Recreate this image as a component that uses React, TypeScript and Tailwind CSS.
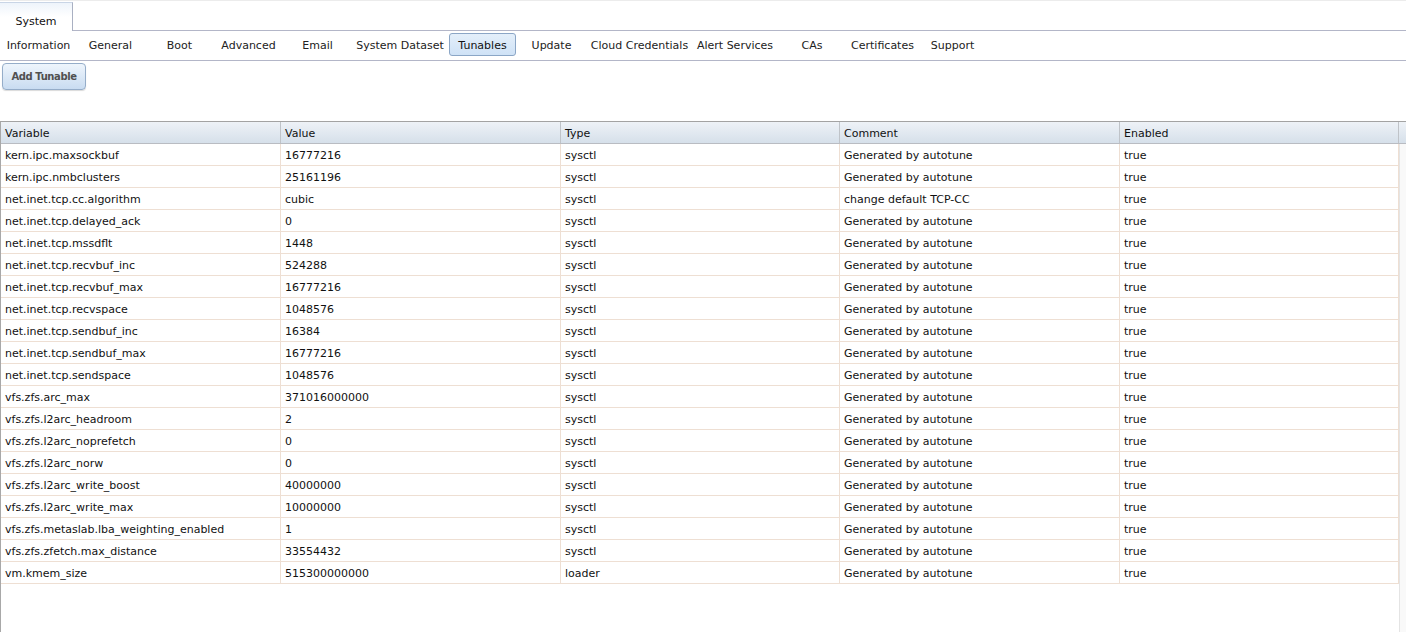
import React from "react";

const tabs: { label: string; w: string; active?: boolean }[] = [
  { label: "Information", w: "w-[73px]" },
  { label: "General", w: "w-[67px]" },
  { label: "Boot", w: "w-[67px]" },
  { label: "Advanced", w: "w-[67px]" },
  { label: "Email", w: "w-[67px]" },
  { label: "System Dataset", w: "w-[94px]" },
  { label: "Tunables", w: "w-[67px]", active: true },
  { label: "Update", w: "w-[67px]" },
  { label: "Cloud Credentials", w: "w-[105px]" },
  { label: "Alert Services", w: "w-[82px]" },
  { label: "CAs", w: "w-[68px]" },
  { label: "Certificates", w: "w-[69px]" },
  { label: "Support", w: "w-[67px]" },
];

const rows: [string, string, string, string, string][] = [
  ["kern.ipc.maxsockbuf", "16777216", "sysctl", "Generated by autotune", "true"],
  ["kern.ipc.nmbclusters", "25161196", "sysctl", "Generated by autotune", "true"],
  ["net.inet.tcp.cc.algorithm", "cubic", "sysctl", "change default TCP-CC", "true"],
  ["net.inet.tcp.delayed_ack", "0", "sysctl", "Generated by autotune", "true"],
  ["net.inet.tcp.mssdflt", "1448", "sysctl", "Generated by autotune", "true"],
  ["net.inet.tcp.recvbuf_inc", "524288", "sysctl", "Generated by autotune", "true"],
  ["net.inet.tcp.recvbuf_max", "16777216", "sysctl", "Generated by autotune", "true"],
  ["net.inet.tcp.recvspace", "1048576", "sysctl", "Generated by autotune", "true"],
  ["net.inet.tcp.sendbuf_inc", "16384", "sysctl", "Generated by autotune", "true"],
  ["net.inet.tcp.sendbuf_max", "16777216", "sysctl", "Generated by autotune", "true"],
  ["net.inet.tcp.sendspace", "1048576", "sysctl", "Generated by autotune", "true"],
  ["vfs.zfs.arc_max", "371016000000", "sysctl", "Generated by autotune", "true"],
  ["vfs.zfs.l2arc_headroom", "2", "sysctl", "Generated by autotune", "true"],
  ["vfs.zfs.l2arc_noprefetch", "0", "sysctl", "Generated by autotune", "true"],
  ["vfs.zfs.l2arc_norw", "0", "sysctl", "Generated by autotune", "true"],
  ["vfs.zfs.l2arc_write_boost", "40000000", "sysctl", "Generated by autotune", "true"],
  ["vfs.zfs.l2arc_write_max", "10000000", "sysctl", "Generated by autotune", "true"],
  ["vfs.zfs.metaslab.lba_weighting_enabled", "1", "sysctl", "Generated by autotune", "true"],
  ["vfs.zfs.zfetch.max_distance", "33554432", "sysctl", "Generated by autotune", "true"],
  ["vm.kmem_size", "515300000000", "loader", "Generated by autotune", "true"],
];

const headers = ["Variable", "Value", "Type", "Comment", "Enabled"];

export default function App() {
  return (
    <div className="w-[1406px] h-[632px] overflow-hidden bg-white font-['DejaVu_Sans',sans-serif] text-[11px] text-[#111] leading-none">
      {/* top tab bar */}
      <div className="h-[31px] border-t border-[#ececec] border-b border-b-[#b3b6c8] flex items-end">
        <div className="w-[73px] h-[29px] border-t border-t-[#c9d5e6] border-r border-r-[#a9b0c2] bg-gradient-to-b from-[#eef4fb] via-white to-white flex items-center justify-center text-[11px] text-[#111] -mb-px pt-[9px]">
          System
        </div>
      </div>
      {/* sub tabs */}
      <div className="h-[30px] border-b border-[#b3b6c8] flex items-start pt-[2px] pl-[2px] gap-[2px]">
        {tabs.map((t) => (
          <div
            key={t.label}
            className={
              t.active
                ? `${t.w} h-[23px] shrink-0 flex items-center justify-center whitespace-nowrap rounded-[3px] border border-[#8ba6c6] bg-gradient-to-b from-[#e4effa] to-[#cfe2f6] text-[#111] pt-[2px]`
                : `${t.w} h-[23px] shrink-0 flex items-center justify-center whitespace-nowrap border border-transparent text-[#222] pt-[2px]`
            }
          >
            {t.label}
          </div>
        ))}
      </div>
      {/* toolbar */}
      <div className="h-[60px] pt-[2px] pl-[2px]">
        <button className="w-[84px] h-[27px] rounded-[4px] border border-[#95adc9] bg-gradient-to-b from-[#eef5fc] to-[#c9dcf1] shadow-[0_1px_1px_rgba(0,0,0,0.15)] text-[10px] font-bold tracking-[-0.4px] text-[#505050] flex items-center justify-center pt-[1px]">
          Add Tunable
        </button>
      </div>
      {/* grid */}
      <div className="h-[511px] border-t border-[#a3a3a3] border-l border-l-[#a8a8a8] flex flex-col">
        {/* header */}
        <div className="flex h-[22px] border-b border-[#b9bcc2] bg-gradient-to-b from-[#eef2f7] to-[#d6e0ea]">
          <div className="grid grid-cols-[280px_280px_279px_280px_279px] w-[1398px] shrink-0">
            {headers.map((h) => (
              <div key={h} className="border-r border-[#bfc3c8] px-[4px] pt-[2px] flex items-center text-[#111]">
                {h}
              </div>
            ))}
          </div>
          <div className="flex-1" />
        </div>
        {/* body */}
        <div className="flex flex-1">
          <div className="w-[1398px] shrink-0">
            {rows.map((r, i) => (
              <div key={i} className="grid grid-cols-[280px_280px_279px_280px_279px] h-[22px] border-b border-[#eedfd3]">
                {r.map((c, j) => (
                  <div key={j} className="border-r border-[#eedfd3] px-[4px] pt-[2px] flex items-center whitespace-nowrap overflow-hidden">
                    {c}
                  </div>
                ))}
              </div>
            ))}
          </div>
          <div className="flex-1 border-l border-[#e4e4e4] bg-[#f9f9f9]" />
        </div>
      </div>
    </div>
  );
}
